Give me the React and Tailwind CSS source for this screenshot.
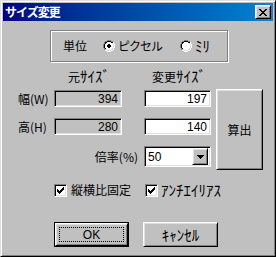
import React from "react";

const jp = "font-['Noto_Sans_CJK_JP','Noto_Sans_CJK_SC',sans-serif]";
const raised =
  "border border-t-white border-l-white border-r-black border-b-black shadow-[inset_1px_1px_0_#dfdfdf,inset_-1px_-1px_0_#808080] bg-[#c0c0c0]";
const sunken =
  "border border-t-[#808080] border-l-[#808080] border-r-white border-b-white shadow-[inset_1px_1px_0_#000,inset_-1px_-1px_0_#dfdfdf]";

function CloseGlyph() {
  return (
    <svg width="8" height="7" viewBox="0 0 8 7" shapeRendering="crispEdges">
      <path
        fill="#000"
        d="M0 0h2v1H0zM6 0h2v1H6zM1 1h2v1H1zM5 1h2v1H5zM2 2h4v1H2zM3 3h2v1H3zM2 4h4v1H2zM1 5h2v1H1zM5 5h2v1H5zM0 6h2v1H0zM6 6h2v1H6z"
      />
    </svg>
  );
}

function Check() {
  return (
    <svg width="7" height="7" viewBox="0 0 7 7" shapeRendering="crispEdges">
      <path
        fill="#000"
        d="M6 0h1v1H6zM5 1h2v1H5zM0 2h1v1H0zM4 2h3v1H4zM0 3h2v1H0zM3 3h3v1H3zM0 4h5v1H0zM1 5h3v1H1zM2 6h1v1H2z"
      />
    </svg>
  );
}

function Radio({ checked }) {
  return (
    <svg width="12" height="12" viewBox="0 0 12 12" shapeRendering="crispEdges">
      <path fill="#808080" d="M4 0h4v1H4zM2 1h2v1H2zM8 1h2v1H8zM1 2h1v2H1zM0 4h1v4H0zM1 8h1v2H1z" />
      <path fill="#000" d="M4 1h4v1H4zM2 2h2v1H2zM8 2h2v1H8zM2 3h1v1H2zM1 4h1v4H1zM2 8h1v1H2z" />
      <path fill="#fff" d="M10 2h1v2h-1zM11 4h1v4h-1zM10 8h1v2h-1zM8 10h2v1H8zM4 11h4v1H4zM2 10h2v1H2z" />
      <path fill="#dfdfdf" d="M9 3h1v1H9zM10 4h1v4h-1zM9 8h1v1H9zM8 9h1v1H8zM4 10h4v1H4zM3 9h1v1H3z" />
      <path fill="#fff" d="M4 2h4v1H4zM3 3h6v1H3zM2 4h8v4H2zM3 8h6v1H3zM4 9h4v1H4z" />
      {checked && <path fill="#000" d="M5 4h2v1H5zM4 5h4v2H4zM5 7h2v1H5z" />}
    </svg>
  );
}

function CheckBox() {
  return (
    <div className={`w-[13px] h-[13px] bg-white ${sunken} flex items-center justify-center`}>
      <Check />
    </div>
  );
}

const num = "font-['Liberation_Sans',sans-serif]";
const hw = "text-[15px] leading-[14px]";

export default function App() {
  return (
    <div
      className={`w-[276px] h-[257px] bg-[#c0c0c0] border border-t-[#dfdfdf] border-l-[#dfdfdf] border-r-black border-b-black shadow-[inset_1px_1px_0_#fff,inset_-1px_-1px_0_#808080] p-[2px] flex flex-col text-black text-[12px] ${jp}`}
    >
      {/* Title bar */}
      <div className="h-[18px] flex items-center justify-between bg-gradient-to-r from-[#000080] to-[#1084d0] pl-[2px] pr-[2px]">
        <span className="text-white font-bold text-[12px] leading-[14px] tracking-[-1px]">サイズ変更</span>
        <div className={`w-[16px] h-[14px] ${raised} flex items-center justify-center`}>
          <CloseGlyph />
        </div>
      </div>

      {/* Unit group */}
      <div className="mt-[9px] ml-[47px] w-[178px] h-[32px] border border-[#808080] shadow-[inset_1px_1px_0_#fff,1px_1px_0_#fff] flex items-center pl-[12px] leading-[14px]">
        <span className="w-[28px]">単位</span>
        <div className="ml-[12px] w-[77px] flex items-center">
          <Radio checked />
          <span className="ml-[3px] tracking-[-1px]">ピクセル</span>
        </div>
        <div className="flex items-center">
          <Radio />
          <span className={`ml-[3px] ${hw}`}>ﾐﾘ</span>
        </div>
      </div>

      {/* Headers */}
      <div className="mt-[7px] flex items-end h-[15px] leading-[14px]">
        <span className="ml-[65px] w-[84px]">
          元<span className={hw}>ｻｲｽﾞ</span>
        </span>
        <span>
          変更<span className={hw}>ｻｲｽﾞ</span>
        </span>
      </div>

      {/* Fields */}
      <div className="mt-[6px] flex">
        <div className="grid grid-cols-[51px_68px_22px_67px] grid-rows-[17px_17px_21px] gap-y-[11px] items-center">
          <span className="pl-[15px] leading-[14px]">幅(W)</span>
          <div className={`h-[17px] ${sunken} flex items-center justify-end pr-[3px] ${num}`}>394</div>
          <div />
          <div className={`h-[17px] bg-white ${sunken} flex items-center justify-end pr-[3px] ${num}`}>197</div>

          <span className="pl-[15px] leading-[14px]">高(H)</span>
          <div className={`h-[17px] ${sunken} flex items-center justify-end pr-[3px] ${num}`}>280</div>
          <div />
          <div className={`h-[17px] bg-white ${sunken} flex items-center justify-end pr-[3px] ${num}`}>140</div>

          <span className="col-span-3 text-right pr-[6px] leading-[14px]">倍率(%)</span>
          <div className={`h-[21px] bg-white ${sunken} flex items-center justify-between pl-[3px] pr-[2px] ${num}`}>
            <span>50</span>
            <div className={`w-[16px] h-[17px] ${raised} flex items-center justify-center`}>
              <svg width="7" height="4" viewBox="0 0 7 4" shapeRendering="crispEdges">
                <path fill="#000" d="M0 0h7v1H0zM1 1h5v1H1zM2 2h3v1H2zM3 3h1v1H3z" />
              </svg>
            </div>
          </div>
        </div>
        <div className={`ml-[5px] mt-[-1px] w-[47px] h-[81px] ${raised} flex items-center justify-center text-[12px]`}>
          算出
        </div>
      </div>

      {/* Checkboxes */}
      <div className="mt-[13px] flex items-center leading-[14px]">
        <div className="ml-[51px] w-[91px] flex items-center">
          <CheckBox />
          <span className="ml-[4px]">縦横比固定</span>
        </div>
        <div className="flex items-center">
          <CheckBox />
          <span className={`ml-[3px] ${hw}`}>ｱﾝﾁｴｲﾘｱｽ</span>
        </div>
      </div>

      {/* Buttons */}
      <div className="mt-[25px] flex">
        <div className="ml-[51px] w-[75px] h-[25px] border border-black">
          <div className={`w-full h-full ${raised} p-[3px]`}>
            <div className={`w-full h-full border border-dotted border-black flex items-center justify-center ${num} text-[12px]`}>
              OK
            </div>
          </div>
        </div>
        <div className={`ml-[14px] w-[75px] h-[25px] ${raised} flex items-center justify-center ${hw}`}>
          ｷｬﾝｾﾙ
        </div>
      </div>
    </div>
  );
}
